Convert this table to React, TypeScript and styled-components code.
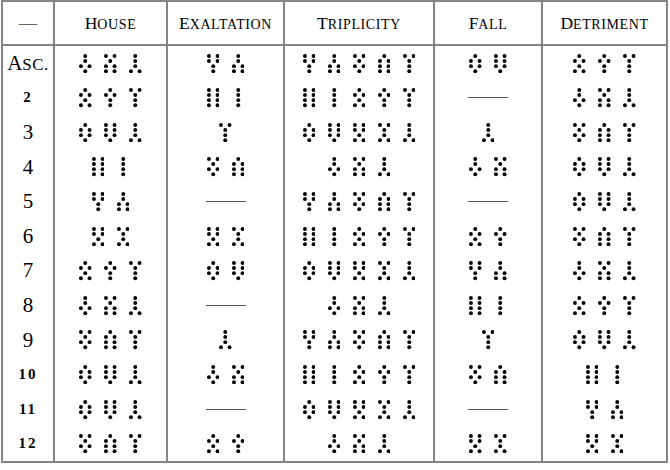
import styled, { createGlobalStyle } from "styled-components";

const GlobalStyle = createGlobalStyle`
  html, body {
    margin: 0;
    padding: 0;
    background: #ffffff;
  }
`;

// geomantic figures, top to bottom: 1 = one dot, 2 = two dots
const puer = [1, 1, 2, 1];
const rubeus = [2, 1, 2, 2];
const cauda = [1, 1, 1, 2];
const amissio = [1, 2, 1, 2];
const puella = [1, 2, 1, 1];
const caput = [2, 1, 1, 1];
const carcer = [1, 2, 2, 1];
const tristitia = [2, 2, 2, 1];
const populus = [2, 2, 2, 2];
const via = [1, 1, 1, 1];
const fortunaMajor = [2, 2, 1, 1];
const fortunaMinor = [1, 1, 2, 2];
const albus = [2, 2, 1, 2];
const conjunctio = [2, 1, 1, 2];
const acquisitio = [2, 1, 2, 1];
const laetitia = [1, 2, 2, 2];

const mars = [puer, rubeus, cauda];
const venus = [amissio, puella, caput];
const saturn = [carcer, tristitia, cauda];
const moon = [populus, via];
const sun = [fortunaMajor, fortunaMinor];
const mercury = [albus, conjunctio];
const jupiter = [acquisitio, laetitia, caput];

const fire = [fortunaMajor, fortunaMinor, acquisitio, laetitia, caput];
const earth = [populus, via, amissio, puella, caput];
const air = [carcer, tristitia, albus, conjunctio, cauda];

type Cell = number[][] | null;

interface Row {
  label: string;
  caps?: boolean;
  small?: boolean;
  cells: Cell[];
}

const rows: Row[] = [
  { label: "Asc.", caps: true, cells: [mars, sun, fire, [carcer, tristitia], venus] },
  { label: "2", small: true, cells: [venus, moon, earth, null, mars] },
  { label: "3", cells: [saturn, [caput], air, [cauda], jupiter] },
  { label: "4", cells: [moon, [acquisitio, laetitia], mars, [puer, rubeus], saturn] },
  { label: "5", cells: [sun, null, fire, null, saturn] },
  { label: "6", cells: [mercury, mercury, earth, [amissio, puella], jupiter] },
  { label: "7", cells: [venus, [carcer, tristitia], air, sun, mars] },
  { label: "8", cells: [mars, null, mars, moon, venus] },
  { label: "9", cells: [jupiter, [cauda], fire, [caput], saturn] },
  { label: "10", small: true, cells: [saturn, [puer, rubeus], earth, [acquisitio, laetitia], moon] },
  { label: "11", small: true, cells: [saturn, null, air, null, sun] },
  { label: "12", small: true, cells: [jupiter, [amissio, puella], mars, mercury, mercury] },
];

const headers = ["House", "Exaltation", "Triplicity", "Fall", "Detriment"];

const widths = [50, 113, 117, 150, 108, 125];

const R = 1.95;
const STEP = 5.1;

const Table = styled.table`
  box-sizing: border-box;
  width: 667px;
  margin: 0 0 0 1px;
  border-collapse: separate;
  border-spacing: 0;
  table-layout: fixed;
  border: 2px solid #858585;
  font-family: "Liberation Serif", "Times New Roman", serif;
  color: #000;
`;

const Col = styled.col<{ $w: number }>`
  width: ${(p) => p.$w}px;
`;

const Head = styled.th`
  box-sizing: border-box;
  height: 44px;
  padding: 0;
  border-bottom: 2px solid #858585;
  border-left: 2px solid #858585;
  font-family: "Liberation Serif", "Times New Roman", serif;
  font-size: 17.5px;
  font-weight: normal;
  text-align: center;
  vertical-align: middle;

  &:first-child {
    border-left: none;
  }
`;

const Sc = styled.span`
  font-size: 0.8em;
  letter-spacing: 0.6px;
  text-transform: uppercase;
`;

const Dash = styled.span`
  font-size: 18px;
  color: #666;
`;

const Label = styled.td<{ $small?: boolean }>`
  box-sizing: border-box;
  height: 34.6px;
  padding: 0;
  font-family: "Liberation Serif", "Times New Roman", serif;
  text-align: center;
  vertical-align: middle;
  font-size: ${(p) => (p.$small ? "15px" : "21px")};
  font-weight: ${(p) => (p.$small ? "bold" : "normal")};
  letter-spacing: ${(p) => (p.$small ? "2px" : "0")};
`;

const Data = styled.td`
  box-sizing: border-box;
  height: 34.6px;
  padding: 0;
  border-left: 2px solid #858585;
  vertical-align: middle;
`;

const Figures = styled.div`
  display: flex;
  justify-content: center;
  align-items: center;
  gap: 12.5px;
`;

const Glyph = styled.svg`
  display: block;
  fill: #000;
`;

const None = styled.div`
  width: 40px;
  margin: 0 auto;
  border-top: 1px solid #555;
`;

function SmallCaps({ text }: { text: string }) {
  return (
    <>
      {text[0]}
      <Sc>{text.slice(1)}</Sc>
    </>
  );
}

function Figure({ lines }: { lines: number[] }) {
  return (
    <Glyph viewBox="0 0 12.5 19.3" width={12.5} height={19.3}>
      {lines.map((n, i) => {
        const y = R + i * STEP;
        return n === 1 ? (
          <circle key={i} cx={6.25} cy={y} r={R} />
        ) : (
          <g key={i}>
            <circle cx={R} cy={y} r={R} />
            <circle cx={12.5 - R} cy={y} r={R} />
          </g>
        );
      })}
    </Glyph>
  );
}

export default function App() {
  return (
    <>
      <GlobalStyle />
      <Table>
        <colgroup>
          {widths.map((w, i) => (
            <Col key={i} $w={w} />
          ))}
        </colgroup>
        <thead>
          <tr>
            <Head>
              <Dash>—</Dash>
            </Head>
            {headers.map((h) => (
              <Head key={h}>
                <SmallCaps text={h} />
              </Head>
            ))}
          </tr>
        </thead>
        <tbody>
          {rows.map((row, i) => (
            <tr key={i}>
              <Label $small={row.small}>
                {row.caps ? <SmallCaps text={row.label} /> : row.label}
              </Label>
              {row.cells.map((cell, j) => (
                <Data key={j}>
                  {cell ? (
                    <Figures>
                      {cell.map((f, k) => (
                        <Figure key={k} lines={f} />
                      ))}
                    </Figures>
                  ) : (
                    <None />
                  )}
                </Data>
              ))}
            </tr>
          ))}
        </tbody>
      </Table>
    </>
  );
}
